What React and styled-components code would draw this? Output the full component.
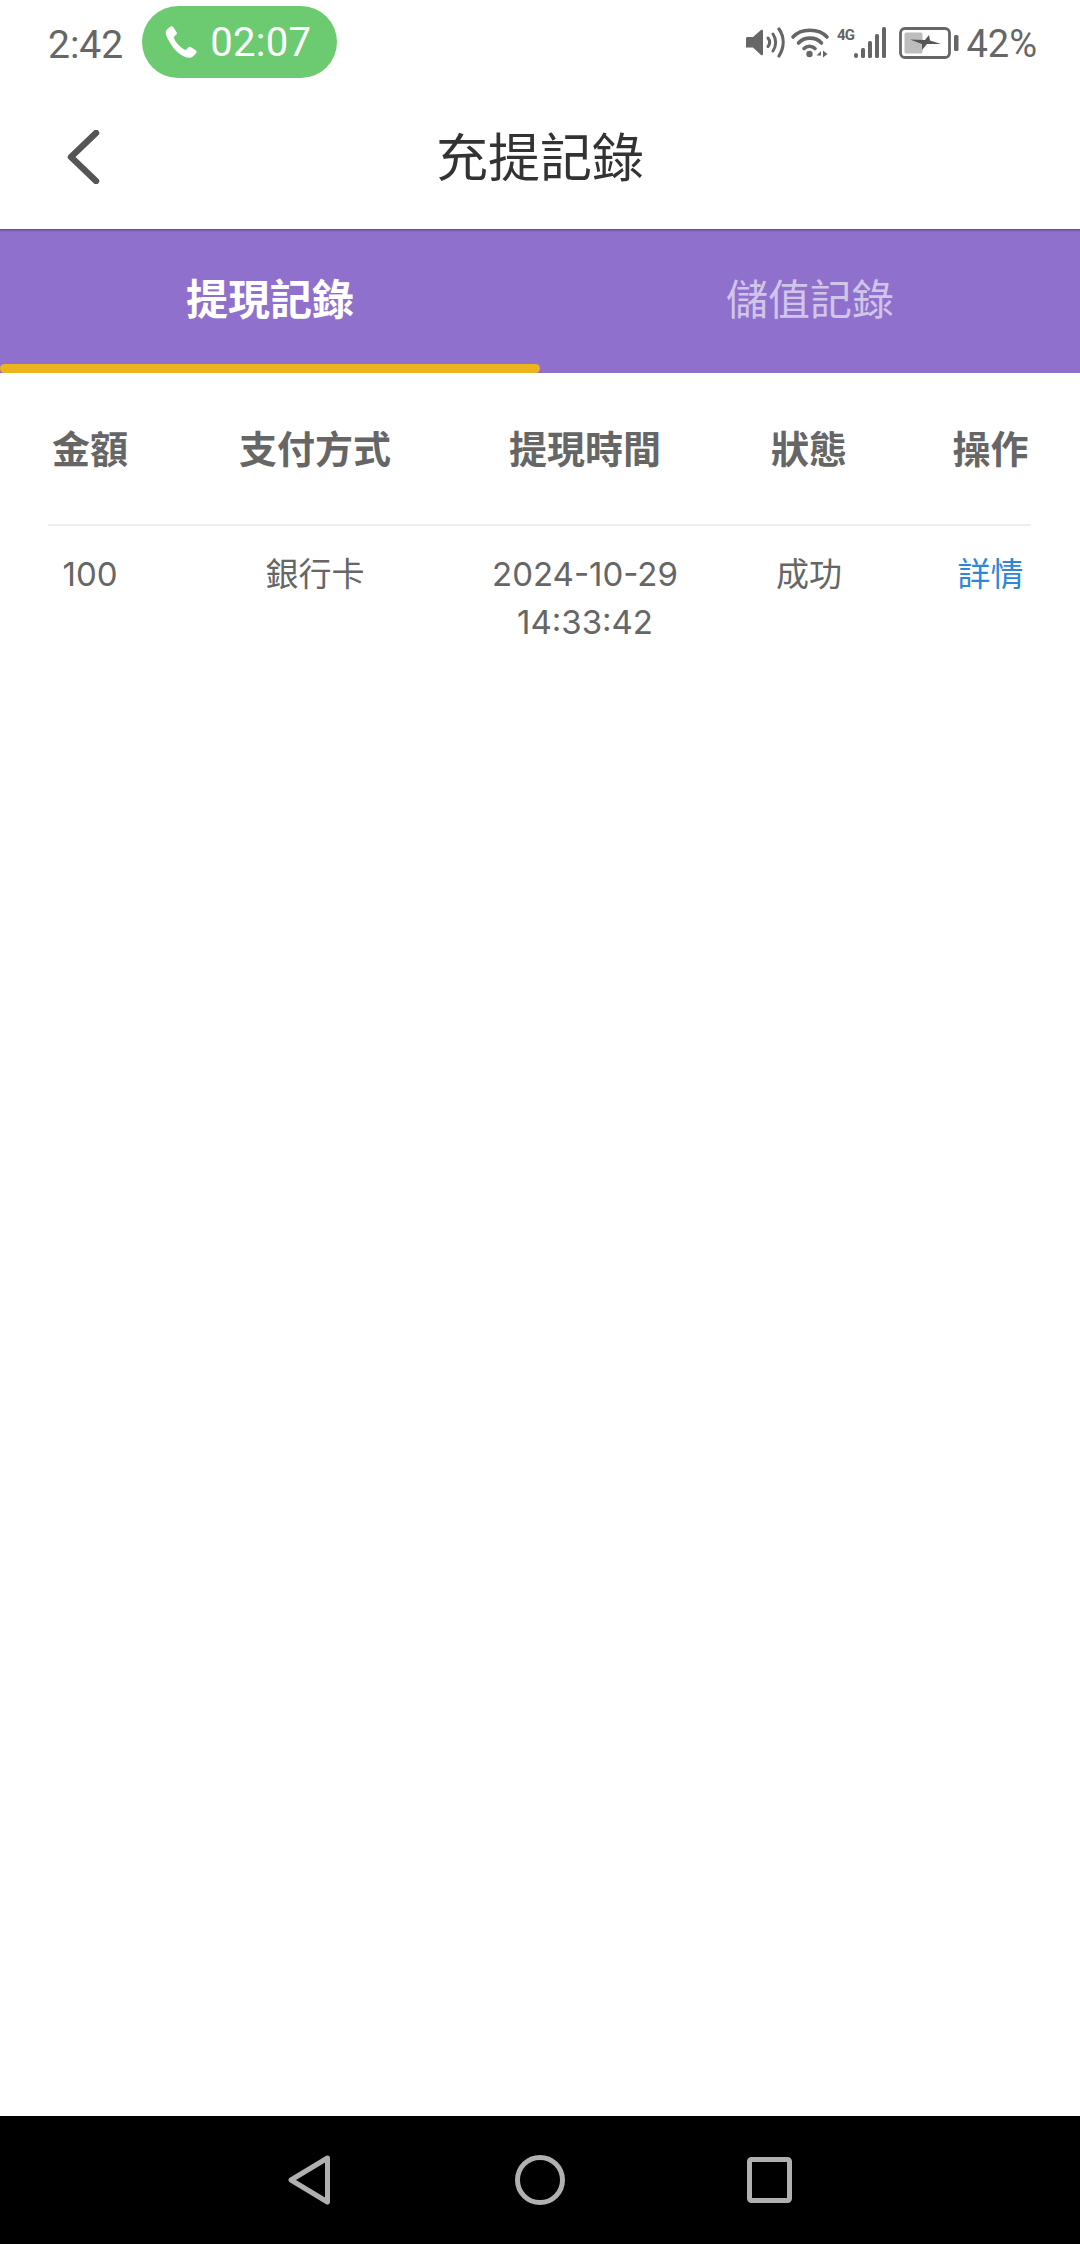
import React from "react";
import styled, { createGlobalStyle } from "styled-components";

const GlobalStyle = createGlobalStyle`
  html, body {
    margin: 0;
    padding: 0;
    background: #fff;
  }
  * {
    box-sizing: border-box;
  }
`;

const FONT = `Roboto, "Noto Sans CJK TC", sans-serif`;

const columnas = ["金額", "支付方式", "提現時間", "狀態", "操作"];

const registros = [
  { monto: "100", metodo: "銀行卡", fecha: "2024-10-29 14:33:42", estado: "成功" },
];

function IconoTelefono() {
  return (
    <svg width="33" height="33" viewBox="3.500 1.200 20 21" fill="#fff">
      <path d="M6.600 1.600c.5-.4 1.200-.3 1.600.2l2.200 3.400c.3.5.2 1-.2 1.400L8.900 7.900c-.3.3-.4.7-.2 1.100.6 1.400 1.600 2.900 2.800 4.200 1.200 1.300 2.600 2.400 4 3.100.4.2.8.1 1.100-.2l1.300-1.400c.4-.4.9-.5 1.400-.2l3.300 2.100c.6.4.7 1.100.3 1.600-.9 1.300-2 2.500-3.300 3-1.500.5-3.100.2-4.800-.7-2.300-1.200-4.500-3-6.300-5.100C6.400 12.300 4.900 10 4 7.800c-.6-1.500-.7-2.800-.2-3.900.5-.9 1.600-1.700 2.800-2.300z" />
    </svg>
  );
}

function IconoAtras() {
  return (
    <svg width="34" height="54" viewBox="0 0 34 54" fill="none">
      <path d="M30 3 L5 27 L30 51" stroke="#555" strokeWidth="6.500" strokeLinecap="round" strokeLinejoin="round" />
    </svg>
  );
}

function IconoVolumen() {
  return (
    <svg width="41" height="31" viewBox="0 0 41 31" fill="none">
      <path d="M1 11.500c0-1 .7-1.500 1.500-1.500H8l8-7c.8-.7 2-.2 2 1v23c0 1.200-1.200 1.700-2 1l-8-7.500H2.500C1.700 21 1 20.500 1 19.500z" fill="#666" />
      <path d="M23 11c2 2.500 2 6 0 8.500" stroke="#666" strokeWidth="3" strokeLinecap="round" />
      <path d="M28 7c3.500 5 3.500 12 0 17" stroke="#666" strokeWidth="3" strokeLinecap="round" />
      <path d="M34 2c5.500 8 5.500 18 0 27" stroke="#666" strokeWidth="3.200" strokeLinecap="round" />
    </svg>
  );
}

function IconoWifi() {
  return (
    <svg width="40" height="31" viewBox="0 0 40 31" fill="none">
      <path d="M3 10C11 1 29 1 37 10" stroke="#666" strokeWidth="3.600" strokeLinecap="round" />
      <path d="M8.500 16c6-6.500 17-6.500 23 0" stroke="#666" strokeWidth="3.600" strokeLinecap="round" />
      <path d="M14 21.500c3-3 8-3 11 0" stroke="#666" strokeWidth="3.600" strokeLinecap="round" />
      <circle cx="19.500" cy="27" r="3.200" fill="#666" />
      <path d="M31 31v-7l-4.500 4.500h4.500zM33 23.500v7l4.500-3.500z" fill="#666" />
    </svg>
  );
}

function IconoSenal() {
  return (
    <svg width="50" height="31" viewBox="0 0 50 31">
      <text x="0" y="13" fontFamily="Roboto, sans-serif" fontSize="15" fontWeight="700" fill="#666" textLength="18">4G</text>
      <rect x="17" y="26" width="4" height="5" rx="2" fill="#666" />
      <rect x="24" y="21" width="4" height="10" rx="1.500" fill="#666" />
      <rect x="31" y="14" width="4" height="17" rx="1.500" fill="#666" />
      <rect x="38" y="7" width="4" height="24" rx="1.500" fill="#666" />
      <rect x="45" y="0" width="4" height="31" rx="1.500" fill="#666" />
    </svg>
  );
}

function IconoBateria() {
  return (
    <svg width="60" height="32" viewBox="0 0 60 32" fill="none">
      <rect x="1.500" y="1.500" width="49" height="29" rx="4.500" stroke="#666" strokeWidth="2.800" />
      <rect x="5.500" y="5.500" width="18" height="21" rx="1.500" fill="#bdbdbd" />
      <path d="M11 12.500 L26 13 L30 8 L31 13.500 L42 17 L28 17 L23 23 L23 17 Z" fill="#555" />
      <rect x="55" y="8" width="4.500" height="16" rx="1.500" fill="#666" />
    </svg>
  );
}

function App() {
  return (
    <Pantalla>
      <GlobalStyle />
      <BarraEstado>
        <GrupoEstado>
          <Hora>2:42</Hora>
          <PastillaLlamada>
            <IconoTelefono />
            02:07
          </PastillaLlamada>
        </GrupoEstado>
        <GrupoIconos>
          <IconoVolumen />
          <IconoWifi />
          <IconoSenal />
          <IconoBateria />
          <Porcentaje>42%</Porcentaje>
        </GrupoIconos>
      </BarraEstado>

      <Encabezado>
        <BotonAtras>
          <IconoAtras />
        </BotonAtras>
        <Titulo>充提記錄</Titulo>
      </Encabezado>

      <Pestanas>
        <Pestana $activa>提現記錄</Pestana>
        <Pestana>儲值記錄</Pestana>
      </Pestanas>

      <Contenido>
        <FilaCabecera>
          {columnas.map((c) => (
            <CeldaCabecera key={c}>{c}</CeldaCabecera>
          ))}
        </FilaCabecera>
        {registros.map((r) => (
          <Fila key={r.fecha}>
            <Celda>{r.monto}</Celda>
            <Celda>{r.metodo}</Celda>
            <Celda>{r.fecha}</Celda>
            <Celda>{r.estado}</Celda>
            <Celda>
              <Enlace>詳情</Enlace>
            </Celda>
          </Fila>
        ))}
      </Contenido>

      <BarraNavegacion>
        <svg width="45" height="50" viewBox="0 0 45 50" fill="none">
          <path d="M39.500 3 L3 25 L39.500 47 Z" stroke="#b0b0b0" strokeWidth="5" strokeLinejoin="round" />
        </svg>
        <svg width="50" height="50" viewBox="0 0 50 50" fill="none">
          <circle cx="25" cy="25" r="22.500" stroke="#b0b0b0" strokeWidth="5" />
        </svg>
        <svg width="45" height="46" viewBox="0 0 45 46" fill="none">
          <rect x="2.500" y="2.500" width="40" height="41" rx="2" stroke="#b0b0b0" strokeWidth="5" />
        </svg>
      </BarraNavegacion>
    </Pantalla>
  );
}

export default App;

const Pantalla = styled.div`
  width: 1080px;
  height: 2244px;
  display: flex;
  flex-direction: column;
  background: #fff;
  font-family: ${FONT};
  overflow: hidden;
`;

const BarraEstado = styled.div`
  height: 84px;
  flex: none;
  display: flex;
  align-items: center;
  justify-content: space-between;
  padding: 0 43px 0 48px;
  color: #666;
`;

const GrupoEstado = styled.div`
  display: flex;
  align-items: center;
  gap: 19px;
`;

const Hora = styled.span`
  font-size: 39px;
  padding-top: 6px;
`;

const PastillaLlamada = styled.div`
  width: 195px;
  height: 72px;
  display: flex;
  align-items: center;
  gap: 12px;
  padding-left: 23px;
  background: #6ccb70;
  border-radius: 36px;
  color: #fff;
  font-size: 40px;
  letter-spacing: 0.3px;
`;

const GrupoIconos = styled.div`
  display: flex;
  align-items: center;
  gap: 7px;
  padding-top: 1px;

  & > svg:nth-of-type(2) {
    margin-left: -3px;
  }
  & > svg:nth-of-type(4) {
    margin-left: 5px;
  }
`;

const Porcentaje = styled.span`
  font-size: 38px;
  padding-top: 3px;
`;

const Encabezado = styled.div`
  height: 145px;
  flex: none;
  display: grid;
  grid-template-columns: 1fr auto 1fr;
  align-items: center;
`;

const BotonAtras = styled.div`
  display: flex;
  padding-left: 66px;
`;

const Titulo = styled.h1`
  margin: 0;
  padding-bottom: 4px;
  font-size: 52px;
  font-weight: 400;
  color: #333;
`;

const Pestanas = styled.div`
  height: 144px;
  flex: none;
  display: flex;
  background: linear-gradient(rgba(60, 40, 90, 0.55), rgba(60, 40, 90, 0) 3px), #8f71cd;
`;

const Pestana = styled.div`
  position: relative;
  flex: 1;
  display: flex;
  align-items: center;
  justify-content: center;
  padding-bottom: 10px;
  font-size: 42px;
  font-weight: ${(p) => (p.$activa ? 700 : 400)};
  color: ${(p) => (p.$activa ? "#fff" : "rgba(255, 255, 255, 0.6)")};

  ${(p) =>
    p.$activa &&
    `
    &::after {
      content: "";
      position: absolute;
      left: 0;
      right: 0;
      bottom: 0;
      height: 9px;
      border-radius: 5px;
      background: #eab41f;
    }
  `}
`;

const Contenido = styled.div`
  flex: 1;
  padding: 0 49px 0 48px;
`;

const FilaBase = styled.div`
  display: grid;
  grid-template-columns: 97px 340px 200px 248px 98px;

  & > *:first-child {
    padding-right: 13px;
  }
  & > *:last-child {
    padding-left: 17px;
  }
`;

const FilaCabecera = styled(FilaBase)`
  height: 153px;
  align-items: center;
  border-bottom: 2px solid #efefef;
`;

const CeldaCabecera = styled.div`
  text-align: center;
  font-size: 38px;
  font-weight: 700;
  color: #666;
  white-space: nowrap;
  padding-bottom: 5px;
`;

const Fila = styled(FilaBase)`
  padding-top: 24px;
`;

const Celda = styled.div`
  text-align: center;
  font-family: Inter, "Noto Sans CJK TC", sans-serif;
  font-size: 33px;
  line-height: 48px;
  color: #666;
`;

const Enlace = styled.span`
  color: #2f87d8;
`;

const BarraNavegacion = styled.div`
  height: 128px;
  flex: none;
  display: flex;
  align-items: center;
  justify-content: center;
  gap: 182px;
  background: #000;
`;
